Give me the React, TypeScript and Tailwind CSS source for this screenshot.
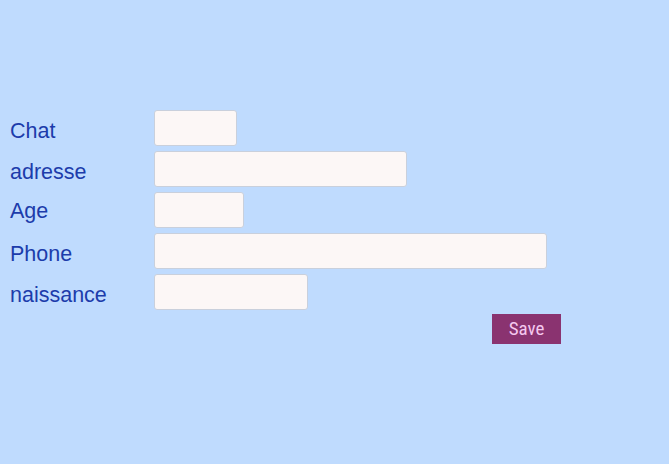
import React from "react";

const fields: { label: string; w: string; mb: string }[] = [
  { label: "Chat", w: "w-[83px]", mb: "mb-[2px]" },
  { label: "adresse", w: "w-[253px]", mb: "mb-[2px]" },
  { label: "Age", w: "w-[90px]", mb: "mb-[4px]" },
  { label: "Phone", w: "w-[393px]", mb: "mb-[2px]" },
  { label: "naissance", w: "w-[154px]", mb: "mb-[2px]" },
];

export default function App() {
  return (
    <div className="w-[669px] h-[464px] bg-[#bfdbfe] overflow-hidden" style={{ fontFamily: '"Liberation Sans", Arial, sans-serif' }}>
      <div className="pt-[110px] pl-[10px] flex flex-col gap-[4px]">
        <div className="flex flex-col gap-[5px]">
          {fields.map((f) => (
            <div key={f.label} className="flex items-end h-[36px]">
              <label className={`w-[144px] ${f.mb} text-[21.5px] leading-[25px] text-[#1c3cab]`}>{f.label}</label>
              <input className={`${f.w} h-[36px] bg-[#fcf7f6] border border-[#c9d0dc] rounded-[3px] outline-none`} />
            </div>
          ))}
        </div>
        <div className="flex">
          <button
            className="ml-[482px] w-[69px] h-[30px] bg-[#8a3370] text-[#f5c8ef] text-[19px] leading-[30px] flex items-center justify-center"
            style={{ fontFamily: '"Liberation Sans Narrow", "Roboto Condensed", "Liberation Sans", sans-serif' }}
          >
            Save
          </button>
        </div>
      </div>
    </div>
  );
}
